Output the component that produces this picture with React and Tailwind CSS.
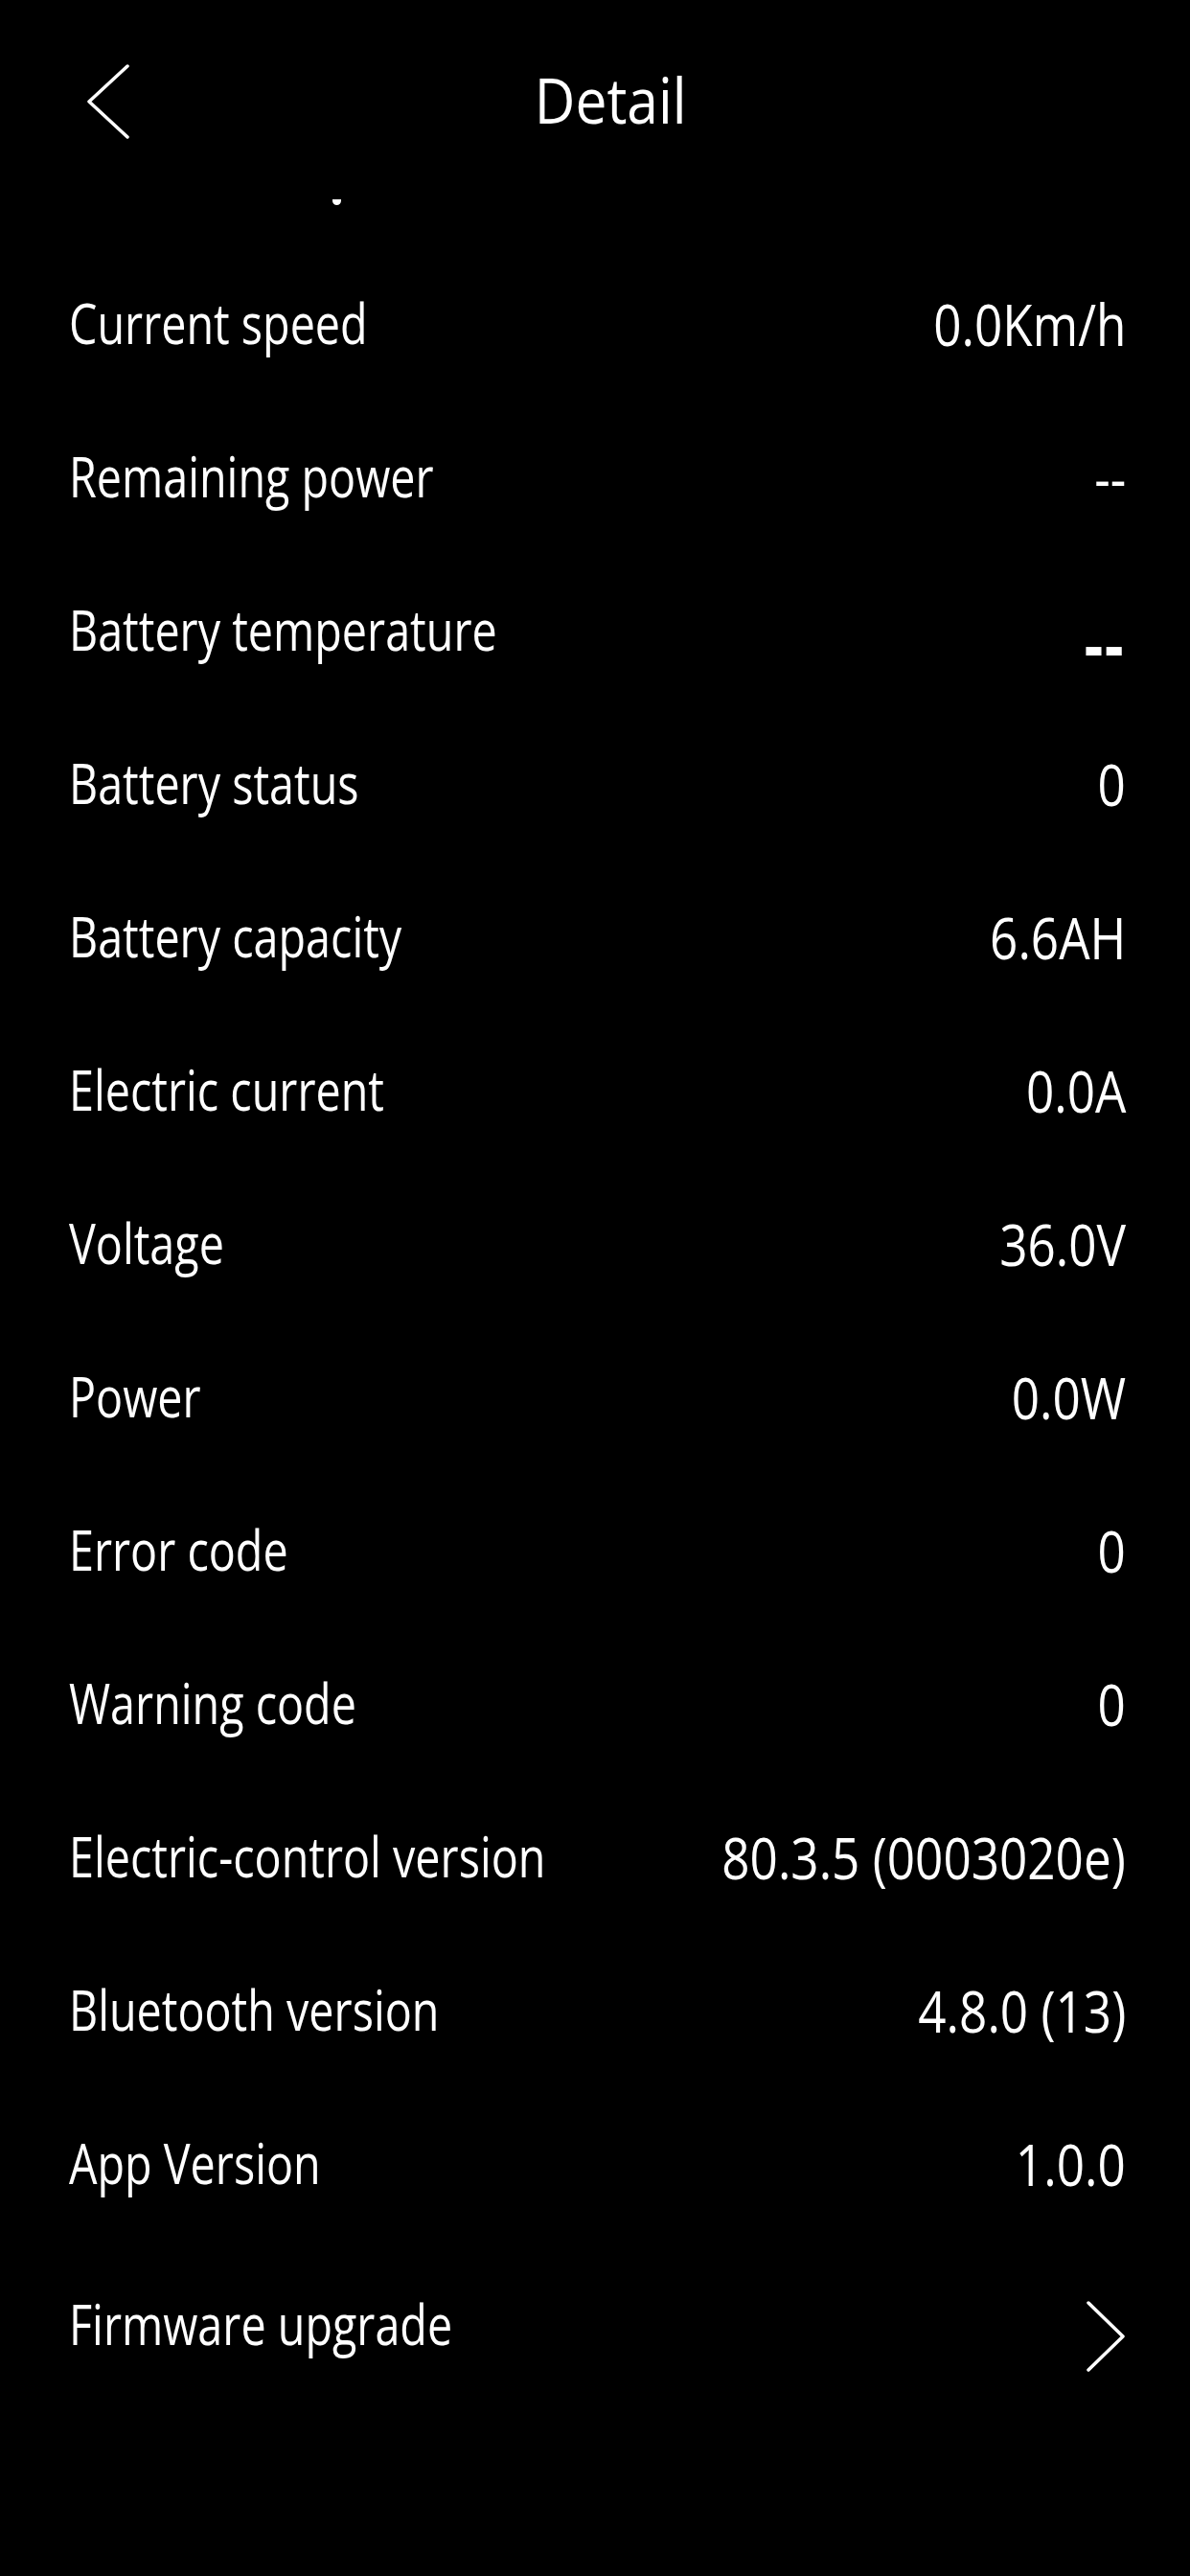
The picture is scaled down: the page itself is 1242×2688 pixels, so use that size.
import React from "react";

const rows = [
  { label: "Current speed", value: "0.0Km/h" },
  { label: "Remaining power", value: "--" },
  { label: "Battery temperature", value: "--", bold: true },
  { label: "Battery status", value: "0" },
  { label: "Battery capacity", value: "6.6AH" },
  { label: "Electric current", value: "0.0A" },
  { label: "Voltage", value: "36.0V" },
  { label: "Power", value: "0.0W" },
  { label: "Error code", value: "0" },
  { label: "Warning code", value: "0" },
  { label: "Electric-control version", value: "80.3.5 (0003020e)" },
  { label: "Bluetooth version", value: "4.8.0 (13)" },
  { label: "App Version", value: "1.0.0" },
];

export default function App() {
  return (
    <div
      className="min-h-[2688px] w-[1242px] bg-black text-white"
      style={{ fontFamily: '"Open Sans", "Noto Sans", sans-serif' }}
    >
      {/* Header */}
      <div className="flex h-[257px] flex-col">
        <div className="mt-[68px] flex h-[76px] items-center">
          <div className="ml-[90px] flex h-[78px] w-[46px] items-center">
            <svg width="46" height="78" viewBox="0 0 46 78" fill="none">
              <polyline
                points="43,2 3,39 43,76"
                stroke="white"
                strokeWidth="3.5"
                strokeLinecap="round"
                strokeLinejoin="round"
              />
            </svg>
          </div>
          <div className="flex flex-1 justify-center">
            <span className="inline-block origin-center -translate-y-[3px] scale-x-[0.89] text-[66px] leading-none">
              Detail
            </span>
          </div>
          <div className="w-[103px]" />
        </div>
        <div className="ml-[347px] mt-[64px] h-[6px] w-[9px] rounded-b-full bg-white" />
      </div>

      {/* Rows */}
      <div className="flex flex-col">
        {rows.map((r) => (
          <div
            key={r.label}
            className="flex h-[160px] items-center justify-between gap-4 pl-[72px] pr-[67px]"
          >
            <span className="inline-block min-w-0 shrink origin-left scale-x-[0.805] whitespace-nowrap text-[58px] leading-none">
              {r.label}
            </span>
            {r.bold ? (
              <span className="inline-block shrink-0 origin-right translate-y-[16px] whitespace-nowrap text-[58px] font-extrabold leading-none tracking-[3px]">
                {r.value}
              </span>
            ) : (
              <span className="inline-block shrink-0 origin-right scale-x-[0.84] whitespace-nowrap text-[61px] leading-none">
                {r.value}
              </span>
            )}
          </div>
        ))}
        <div className="mt-[8px] flex h-[160px] items-center justify-between pl-[72px] pr-[67px]">
          <span className="inline-block origin-left scale-x-[0.805] whitespace-nowrap text-[58px] leading-none">
            Firmware upgrade
          </span>
          <svg width="42" height="74" viewBox="0 0 42 74" fill="none" className="mt-[26px]">
            <polyline
              points="3,2 39,37 3,72"
              stroke="white"
              strokeWidth="3.5"
              strokeLinecap="round"
              strokeLinejoin="round"
            />
          </svg>
        </div>
      </div>
    </div>
  );
}
